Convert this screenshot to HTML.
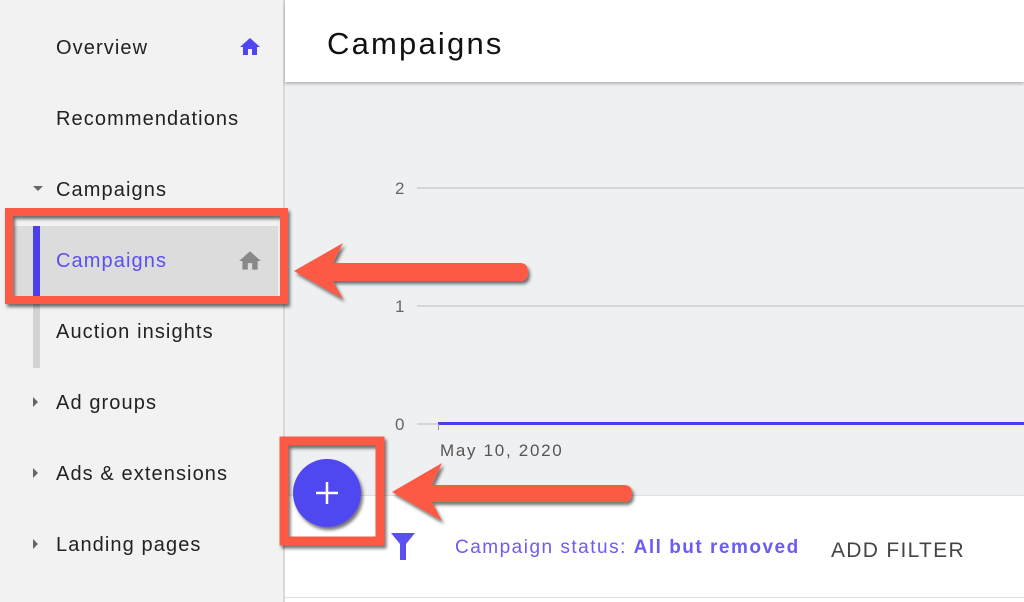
<!DOCTYPE html>
<html><head><meta charset="utf-8"><style>
body{margin:0;width:1024px;height:602px;overflow:hidden;position:relative;font-family:"Liberation Sans",sans-serif;background:#fff}
.sb{position:absolute;left:0;top:0;width:283px;height:602px;background:#f2f2f2;border-right:2px solid #d9d9d9}
.it{position:absolute;left:56px;font-size:20px;color:#222;line-height:24px;letter-spacing:1.1px}
.tri{position:absolute;left:33px;width:0;height:0}
.hdr{position:absolute;left:285px;top:0;right:0;height:82px;background:#fff;box-shadow:0 2px 3px rgba(0,0,0,.25);z-index:2}
.chart{position:absolute;left:285px;top:82px;right:0;height:413px;background:#eff0f2}
.gl{position:absolute;left:417px;right:0;height:2px;background:#d6d6d6}
.yl{position:absolute;left:395px;font-size:17px;color:#666}
.bot{position:absolute;left:285px;top:495px;right:0;bottom:0;background:#fff;border-top:1px solid #e0e0e0}
</style></head><body>
<div class="sb">
<div class="it" style="top:36px">Overview</div>
<svg style="position:absolute;left:237px;top:35px" width="26" height="24" viewBox="0 0 24 24"><path d="M10 20v-6h4v6h5v-8h3L12 3 2 12h3v8z" fill="#4f46f0"/></svg>
<div class="it" style="top:107px">Recommendations</div>
<div class="tri" style="top:186px;border-left:5px solid transparent;border-right:5px solid transparent;border-top:5px solid #666"></div>
<div class="it" style="top:178px">Campaigns</div>
<div style="position:absolute;left:14px;top:226px;width:264px;height:70px;background:#dcdcdc"></div>
<div style="position:absolute;left:33px;top:226px;width:7px;height:70px;background:#4a3fe8"></div>
<div style="position:absolute;left:33px;top:296px;width:7px;height:72px;background:#d3d3d3"></div>
<div class="it" style="top:249px;color:#5b4ff2">Campaigns</div>
<svg style="position:absolute;left:236px;top:248px" width="28" height="26" viewBox="0 0 24 24"><path d="M10 20v-6h4v6h5v-8h3L12 3 2 12h3v8z" fill="#888"/></svg>
<div class="it" style="top:320px">Auction insights</div>
<div class="tri" style="top:397px;border-top:5px solid transparent;border-bottom:5px solid transparent;border-left:5px solid #666"></div>
<div class="it" style="top:391px">Ad groups</div>
<div class="tri" style="top:468px;border-top:5px solid transparent;border-bottom:5px solid transparent;border-left:5px solid #666"></div>
<div class="it" style="top:462px">Ads &amp; extensions</div>
<div class="tri" style="top:539px;border-top:5px solid transparent;border-bottom:5px solid transparent;border-left:5px solid #666"></div>
<div class="it" style="top:533px">Landing pages</div>
</div>
<div class="hdr"><div style="position:absolute;left:42px;top:26px;font-size:31px;color:#111;letter-spacing:2.2px">Campaigns</div></div>
<div class="chart"></div>
<div class="gl" style="top:187px"></div><div class="yl" style="top:179px">2</div>
<div class="gl" style="top:305px"></div><div class="yl" style="top:297px">1</div>
<div class="gl" style="top:423px"></div><div class="yl" style="top:415px">0</div>
<div style="position:absolute;left:438px;top:422px;right:0;height:3px;background:#4a3fe8"></div>
<div style="position:absolute;left:438px;top:424px;width:1px;height:6px;background:#999"></div>
<div style="position:absolute;left:440px;top:441px;font-size:17px;color:#555;letter-spacing:1.7px">May 10, 2020</div>
<div class="bot">
<svg style="position:absolute;left:106px;top:37px" width="24" height="28" viewBox="0 0 24 28"><path d="M0 0h24L15 11v16H9V11z" fill="#5b4ff2"/></svg>
<div style="position:absolute;left:170px;top:41px;font-size:19px;color:#6b5cf5;letter-spacing:1.5px">Campaign status: <b>All but removed</b></div>
<div style="position:absolute;left:546px;top:43px;font-size:21px;color:#444;letter-spacing:1.3px">ADD FILTER</div>
<div style="position:absolute;left:0;right:0;top:101px;height:1px;background:#e0e0e0"></div>
</div>
<svg style="position:absolute;left:0;top:0;z-index:5" width="1024" height="602">
<defs><filter id="s" x="-10%" y="-10%" width="130%" height="140%"><feDropShadow dx="2" dy="3" stdDeviation="1.5" flood-color="#000" flood-opacity=".55"/></filter></defs>
<circle cx="327" cy="493" r="34" fill="#4f46f0" filter="url(#s)"/>
<path d="M327 482v22M316 493h22" stroke="#fff" stroke-width="2.5"/>
<g filter="url(#s)" fill="#fd5a44">
<rect x="9" y="212" width="275" height="88" fill="none" stroke="#fd5a44" stroke-width="8"/>
<path d="M294 271L343 243L333 263H520Q528 263 528 272Q528 281 520 281H333L343 299Z"/>
<rect x="284" y="441" width="96" height="100" fill="none" stroke="#fd5a44" stroke-width="9"/>
<path d="M392 492L442 463L432 485H624Q632 485 632 493Q632 502 624 502H432L442 521Z"/>
</g>
</svg>
</body></html>
